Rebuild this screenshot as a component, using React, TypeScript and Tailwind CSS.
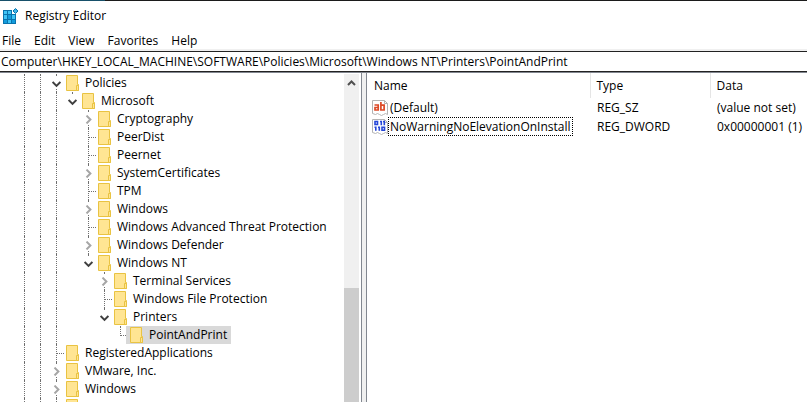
import React from "react";

interface TreeNode {
  name: string;
  depth: number;
  state: "open" | "closed" | "leaf";
  guides: number[];
  selected?: boolean;
  last?: boolean;
}

const nodes: TreeNode[] = [
  { name: "Policies", depth: 3, state: "open", guides: [1, 2] },
  { name: "Microsoft", depth: 4, state: "open", guides: [1, 2, 3], last: true },
  { name: "Cryptography", depth: 5, state: "closed", guides: [1, 2, 3] },
  { name: "PeerDist", depth: 5, state: "leaf", guides: [1, 2, 3] },
  { name: "Peernet", depth: 5, state: "leaf", guides: [1, 2, 3] },
  { name: "SystemCertificates", depth: 5, state: "closed", guides: [1, 2, 3] },
  { name: "TPM", depth: 5, state: "leaf", guides: [1, 2, 3] },
  { name: "Windows", depth: 5, state: "closed", guides: [1, 2, 3] },
  { name: "Windows Advanced Threat Protection", depth: 5, state: "leaf", guides: [1, 2, 3] },
  { name: "Windows Defender", depth: 5, state: "closed", guides: [1, 2, 3] },
  { name: "Windows NT", depth: 5, state: "open", guides: [1, 2, 3], last: true },
  { name: "Terminal Services", depth: 6, state: "closed", guides: [1, 2, 3] },
  { name: "Windows File Protection", depth: 6, state: "leaf", guides: [1, 2, 3] },
  { name: "Printers", depth: 6, state: "open", guides: [1, 2, 3], last: true },
  { name: "PointAndPrint", depth: 7, state: "leaf", guides: [1, 2, 3], last: true, selected: true },
  { name: "RegisteredApplications", depth: 3, state: "leaf", guides: [1, 2] },
  { name: "VMware, Inc.", depth: 3, state: "closed", guides: [1, 2] },
  { name: "Windows", depth: 3, state: "closed", guides: [1, 2] },
  { name: "", depth: 3, state: "leaf", guides: [1, 2] },
];

const values = [
  { name: "(Default)", type: "REG_SZ", data: "(value not set)", binary: false, focused: false },
  { name: "NoWarningNoElevationOnInstall", type: "REG_DWORD", data: "0x00000001 (1)", binary: true, focused: true },
];

const menus = ["File", "Edit", "View", "Favorites", "Help"];

function RegistryIcon() {
  return (
    <svg className="size-4 shrink-0" viewBox="0 0 16 16" aria-hidden="true">
      <path d="M0 2h9v4h4v10H0z" fill="#0873ad" />
      <path d="M1 3h3v3H1zM5 3h3v3H5zM1 7h3v4H1zM9 7h3v4H9zM5 12h3v3H5z" fill="#3fc4f5" />
      <path d="M5 7h3v4H5zM1 12h3v3H1zM9 12h3v3H9z" fill="#129bdc" />
      <path d="M12.5.5l2.500 2.500-2.500 2.500L10 3z" fill="#3fb4e6" stroke="#0873ad" />
    </svg>
  );
}

function FolderIcon() {
  return (
    <svg className="h-4 w-[13px] shrink-0" viewBox="0 0 13 16" aria-hidden="true">
      <path d="M.5.5h11v9h1v6H.5z" fill="#ffe593" stroke="#e9c342" />
      <path d="M10.5 15.5v-5h2v5z" fill="#ffe593" stroke="#e9c342" />
    </svg>
  );
}

function ValueIcon({ binary }: { binary: boolean }) {
  return (
    <svg className="size-4 shrink-0" viewBox="0 0 16 16" aria-hidden="true">
      <path d="M.5.5h12l3 3v11l-2-1-2 1-2 1-2-1-2-1-2 1-3-1z" fill="#fff" stroke="#b4b4b4" />
      <path d="M12.5.5v3h3" fill="none" stroke="#b4b4b4" />
      {binary ? (
        <g fill="none" stroke="#2546d8" strokeWidth="1.6">
          <path d="M3 2.500h2.500v3H3zM8 2.500h1.300V6.300M11 2.500h1.300V6.300" />
          <path d="M2.500 8.200h1.300v3.600M6 8.200h1.300v3.600M10 8.200h2.500v3H10z" />
        </g>
      ) : (
        <g fill="none" stroke="#dc4a27" strokeWidth="1.7">
          <path d="M2.500 5h3.700v5.800M6.200 7.500H3V10h3.200" />
          <path d="M8.900 2v8.800M8.900 5.200h3.200V10H8.900" />
        </g>
      )}
    </svg>
  );
}

function Toggle({ node }: { node: TreeNode }) {
  return (
    <button type="button" aria-label={`Toggle ${node.name}`} className="flex h-3 w-2.5 items-center justify-center bg-white">
      <svg className="size-[9px] shrink-0" viewBox="0 0 9 9" fill="none" strokeWidth="2" aria-hidden="true">
        {node.state === "open" ? (
          <path d="M.6 3l3.900 3.900L8.400 3" stroke="#404040" />
        ) : (
          <path d="M2.500.6l3.900 3.900-3.900 3.900" stroke="#a6a6a6" />
        )}
      </svg>
    </button>
  );
}

function TreeRow({ node }: { node: TreeNode }) {
  return (
    <li className="flex h-[18px] items-center whitespace-nowrap">
      {Array.from({ length: node.depth }, (_, i) => (
        <span key={i} className="flex h-full w-4 shrink-0 pl-2">
          {node.guides.includes(i) && <span className="h-full border-l border-dotted border-[#707070]" />}
        </span>
      ))}
      <span className="grid h-full w-4 shrink-0 items-center">
        <span
          className={`col-start-1 row-start-1 ml-2 w-px self-start border-l border-dotted border-[#707070] ${
            node.last && node.state === "leaf" ? "h-2.5" : node.last ? "h-2" : "h-full"
          }`}
        />
        {node.state === "leaf" ? (
          <span className="col-start-1 row-start-1 ml-2 border-t border-dotted border-[#707070]" />
        ) : (
          <span className="z-10 col-start-1 row-start-1 justify-self-center">
            <Toggle node={node} />
          </span>
        )}
      </span>
      <span className={`-ml-0.5 flex h-full items-center gap-1.5 pr-1 pl-1 ${node.selected ? "bg-[#d9d9d9]" : ""}`}>
        <FolderIcon />
        {node.name}
      </span>
    </li>
  );
}

function ValuesTable() {
  return (
    <table className="w-full table-fixed text-left">
      <thead>
        <tr className="h-[25px]">
          <th className="w-[223px] pl-[7px] font-normal">Name</th>
          <th className="w-[120px] border-l border-[#e5e5e5] pl-1.5 font-normal">Type</th>
          <th className="border-l border-[#e5e5e5] pl-1.5 font-normal">Data</th>
        </tr>
      </thead>
      <tbody>
        {values.map((value) => (
          <tr key={value.name} className="h-[19px] whitespace-nowrap">
            <td className="pl-[5px]">
              <div className="flex items-center">
                <ValueIcon binary={value.binary} />
                <span className={`border border-dotted px-px leading-[17px] ${value.focused ? "border-black" : "border-transparent"}`}>
                  {value.name}
                </span>
              </div>
            </td>
            <td className="pl-[7px]">{value.type}</td>
            <td className="pl-[7px]">{value.data}</td>
          </tr>
        ))}
      </tbody>
    </table>
  );
}

export default function App() {
  return (
    <div className="flex h-screen flex-col overflow-hidden bg-white font-['Open_Sans','Noto_Sans',sans-serif] text-xs text-black">
      <div className="h-px shrink-0 bg-linear-to-r from-[#17506a] from-13% to-[#1b1b1b] to-13%" />
      <header className="flex h-[30px] shrink-0 items-center gap-1.5 px-[3px]">
        <RegistryIcon />
        <h1>Registry Editor</h1>
      </header>
      <nav className="flex h-5 shrink-0 items-center gap-[13px] border-b-2 border-[#f0f0f0] px-0.5 pt-0.5">
        {menus.map((menu) => (
          <button key={menu} type="button">
            {menu}
          </button>
        ))}
      </nav>
      <input
        aria-label="Registry path"
        className="h-[21px] w-full shrink-0 border-y border-[#222] px-px outline-none"
        defaultValue="Computer\HKEY_LOCAL_MACHINE\SOFTWARE\Policies\Microsoft\Windows NT\Printers\PointAndPrint"
      />
      <main className="flex min-h-0 flex-1 border-t border-[#828790]">
        <section className="flex w-[362px] shrink-0 border-r border-[#828790] pt-px">
          <ul className="min-w-0 flex-1 overflow-hidden">
            {nodes.map((node, i) => (
              <TreeRow key={i} node={node} />
            ))}
          </ul>
          <div className="mr-0.5 flex w-[15px] flex-col bg-[#f0f0f0]">
            <button type="button" aria-label="Scroll up" className="flex h-[214px] shrink-0 justify-center pt-1">
              <svg className="size-[9px]" viewBox="0 0 9 9" fill="none" aria-hidden="true">
                <path d="M1 7l3.500-3.500L8 7" stroke="#505050" strokeWidth="2" />
              </svg>
            </button>
            <div className="flex-1 bg-[#cdcdcd]" />
          </div>
        </section>
        <div className="w-1 shrink-0 bg-[#f0f0f0]" />
        <section className="min-w-0 flex-1 border-l border-[#828790]">
          <ValuesTable />
        </section>
      </main>
    </div>
  );
}
